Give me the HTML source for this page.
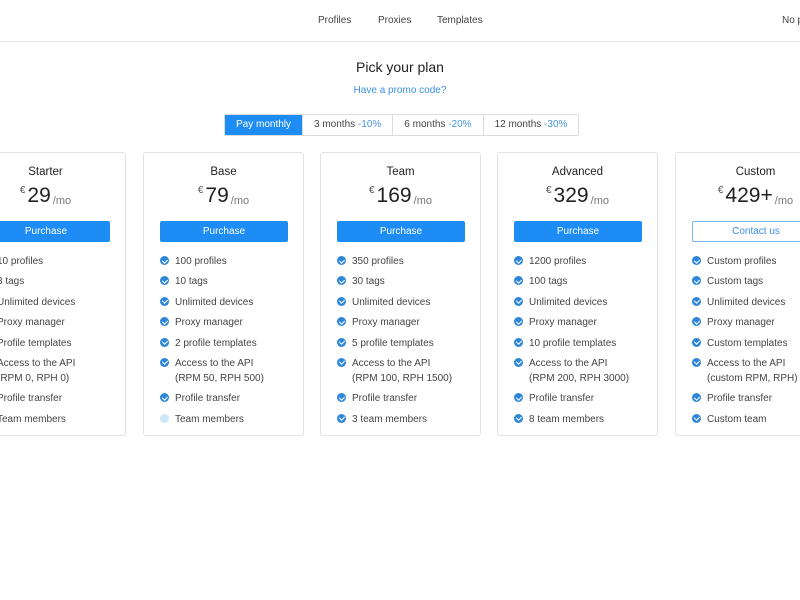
<!DOCTYPE html>
<html><head><meta charset="utf-8"><style>
*{margin:0;padding:0;box-sizing:border-box}
body{width:800px;height:600px;overflow:hidden;background:#fff;font-family:"Liberation Sans",sans-serif;color:#333;position:relative}
.nav{position:absolute;top:0;left:0;width:800px;height:42px;border-bottom:1px solid #e4e4e4}
.nav span{position:absolute;top:15px;font-size:10px;color:#444;white-space:nowrap}
h1{position:absolute;top:59px;left:0;width:800px;text-align:center;font-size:14px;font-weight:normal;color:#222}
.promo{position:absolute;top:85px;width:800px;text-align:center;font-size:10px;color:#3a8ee6}
.tabs{position:absolute;top:114px;left:224px;display:flex;height:22px;border:1px solid #dcdcdc;border-radius:2px}
.tabs div{font-size:10px;line-height:20px;padding:0 11px;border-left:1px solid #dcdcdc;color:#444}
.tabs div:first-child{border:none;background:#1e8cf5;color:#fff;width:77px;padding:0;text-align:center}
.tabs b{font-weight:normal;color:#4a96e0}
.card{position:absolute;top:152px;width:161px;height:284px;border:1px solid #e2e2e2;border-radius:3px;background:#fff}
.t{position:absolute;top:13px;width:100%;text-align:center;font-size:11.5px;color:#222}
.p{position:absolute;top:31px;width:100%;text-align:center;white-space:nowrap;color:#222}
.p .e{font-size:10px;vertical-align:9px;color:#555;margin-right:2px}
.p .n{font-size:21px}
.p .m{font-size:11px;color:#777;vertical-align:-2px;margin-left:-1px}
.btn{position:absolute;top:68px;left:16px;width:128px;height:21px;border-radius:2px;background:#1e8cf5;color:#fff;font-size:10px;text-align:center;line-height:22px}
.btn.o{background:#fff;border:1px solid #7ab8ef;color:#3a8ee6;line-height:20px}
ul{position:absolute;top:101px;left:0;list-style:none}
li{position:relative;padding-left:31px;font-size:10px;line-height:15px;margin-bottom:5.4px;color:#444;white-space:nowrap}
li:before{content:"";position:absolute;left:16px;top:2px;width:9px;height:9px;border-radius:50%;background:#2d86d8}
li:after{content:"";position:absolute;left:18.8px;top:3.5px;width:2.5px;height:4px;border:solid #fff;border-width:0 1.2px 1.2px 0;transform:rotate(45deg)}
li.x:before{background:#cfe8f5}li.x:after{display:none}
.s li:before,.s li:after{display:none}
</style></head><body>
<div class="nav"><span style="left:318px">Profiles</span><span style="left:378px">Proxies</span><span style="left:437px">Templates</span><span style="left:782px">No p</span></div>
<h1>Pick your plan</h1>
<div class="promo">Have a promo code?</div>
<div class="tabs"><div>Pay monthly</div><div>3 months <b>-10%</b></div><div>6 months <b>-20%</b></div><div>12 months <b>-30%</b></div></div>

<div class="card s" style="left:-35px"><div class="t">Starter</div><div class="p"><span class="e">€</span><span class="n">29</span><span class="m"> /mo</span></div><div class="btn">Purchase</div>
<ul><li>10 profiles</li><li>3 tags</li><li>Unlimited devices</li><li>Proxy manager</li><li>Profile templates</li><li>Access to the API<br>(RPM 0, RPH 0)</li><li>Profile transfer</li><li>Team members</li></ul></div>

<div class="card" style="left:143px"><div class="t">Base</div><div class="p"><span class="e">€</span><span class="n">79</span><span class="m"> /mo</span></div><div class="btn">Purchase</div>
<ul><li>100 profiles</li><li>10 tags</li><li>Unlimited devices</li><li>Proxy manager</li><li>2 profile templates</li><li>Access to the API<br>(RPM 50, RPH 500)</li><li>Profile transfer</li><li class="x">Team members</li></ul></div>

<div class="card" style="left:320px"><div class="t">Team</div><div class="p"><span class="e">€</span><span class="n">169</span><span class="m"> /mo</span></div><div class="btn">Purchase</div>
<ul><li>350 profiles</li><li>30 tags</li><li>Unlimited devices</li><li>Proxy manager</li><li>5 profile templates</li><li>Access to the API<br>(RPM 100, RPH 1500)</li><li>Profile transfer</li><li>3 team members</li></ul></div>

<div class="card" style="left:497px"><div class="t">Advanced</div><div class="p"><span class="e">€</span><span class="n">329</span><span class="m"> /mo</span></div><div class="btn">Purchase</div>
<ul><li>1200 profiles</li><li>100 tags</li><li>Unlimited devices</li><li>Proxy manager</li><li>10 profile templates</li><li>Access to the API<br>(RPM 200, RPH 3000)</li><li>Profile transfer</li><li>8 team members</li></ul></div>

<div class="card" style="left:675px"><div class="t">Custom</div><div class="p"><span class="e">€</span><span class="n">429+</span><span class="m"> /mo</span></div><div class="btn o">Contact us</div>
<ul><li>Custom profiles</li><li>Custom tags</li><li>Unlimited devices</li><li>Proxy manager</li><li>Custom templates</li><li>Access to the API<br>(custom RPM, RPH)</li><li>Profile transfer</li><li>Custom team</li></ul></div>
</body></html>
